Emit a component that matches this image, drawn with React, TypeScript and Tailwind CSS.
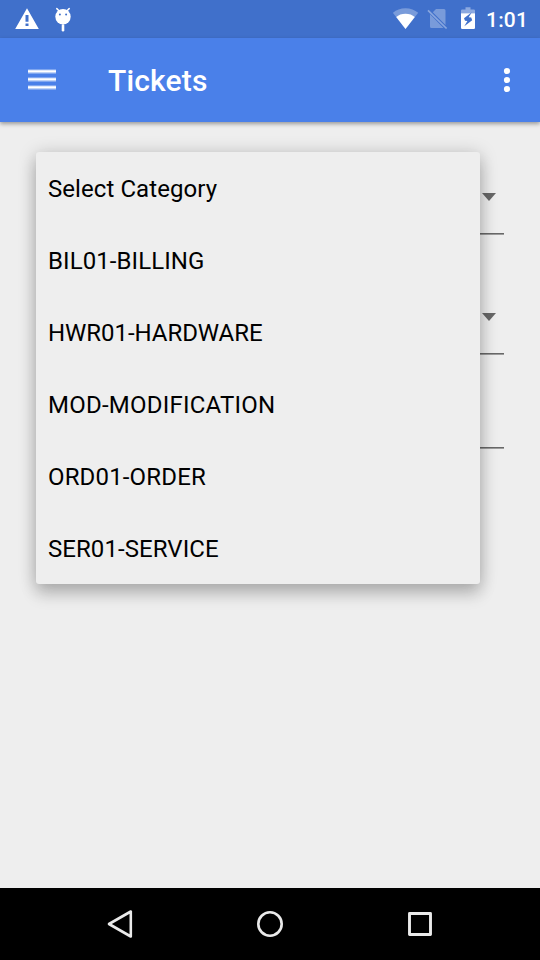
const categories = [
  { name: 'Select Category', tracking: 'tracking-[0.07px]' },
  { name: 'BIL01-BILLING', tracking: 'tracking-[0.08px]' },
  { name: 'HWR01-HARDWARE', tracking: 'tracking-[-0.05px]' },
  { name: 'MOD-MODIFICATION', tracking: 'tracking-[0.23px]' },
  { name: 'ORD01-ORDER', tracking: 'tracking-[0.16px]' },
  { name: 'SER01-SERVICE', tracking: 'tracking-[0.06px]' },
];

function StatusBar() {
  return (
    <div className="flex h-[38px] shrink-0 items-center bg-[#4070cb] text-white">
      <svg className="ml-[15px] h-[38px] w-6" viewBox="0 0 24 38" fill="#fff">
        <path
          fillRule="evenodd"
          d="M12 8.300 23.800 29H.2L12 8.300ZM10.500 15v6.800h3V15h-3Zm0 8.500V26h3v-2.500h-3Z"
        />
      </svg>
      <svg className="ml-[15px] h-[38px] w-[18px]" viewBox="0 0 18 38">
        <path d="M2.800 8.600 5.200 11M15.200 8.600 12.800 11" stroke="#fff" strokeWidth="1.500" strokeLinecap="round" />
        <circle cx="9" cy="16.700" r="7.700" fill="#fff" />
        <path d="M9 25.500v4.700" stroke="#fff" strokeWidth="2.600" strokeLinecap="round" />
        <circle cx="5.900" cy="14.400" r="1" fill="#4070cb" />
        <circle cx="12.100" cy="14.400" r="1" fill="#4070cb" />
      </svg>
      <svg className="ml-auto h-[38px] w-[26px]" viewBox="0 0 26 38">
        <path d="M12.500 29 -.2 12.800C3.100 10 7.500 8.200 12.500 8.200s9.400 1.800 12.700 4.600L12.500 29Z" fill="#fff" fillOpacity=".3" />
        <path d="M12.500 29 3.200 17.100C5.500 14.800 8.800 13.700 12.500 13.700s7 1.100 9.300 3.400L12.500 29Z" fill="#fff" />
      </svg>
      <svg className="ml-2 h-[38px] w-[21px]" viewBox="0 0 21 38">
        <path
          d="M9 9h8a1.500 1.500 0 0 1 1.500 1.500v14.500L5.800 12.300 9 9ZM3 14.300 16.500 28H4.500A1.500 1.500 0 0 1 3 26.500V14.300Z"
          fill="#fff"
          fillOpacity=".3"
        />
        <path d="m1 10.300 18.600 18.200" stroke="#fff" strokeOpacity=".38" strokeWidth="1.700" />
      </svg>
      <svg className="ml-[13px] h-[38px] w-[14px]" viewBox="0 0 14 38">
        <path d="M0 13.300V10.700Q0 9.500 1.200 9.500H4.500V7.300h5v2.200h3.300Q14 9.500 14 10.700V13.300Z" fill="#fff" fillOpacity=".4" />
        <path d="M0 13.300h14v14.500q0 1.200-1.200 1.200H1.200Q0 29 0 27.800Z" fill="#fff" />
        <path d="M10.800 12.300 3 18.200l1 2.500 2.400.3-3.100 5.200 7.900-6-1-2.600-2.500-.3Z" fill="#4070cb" />
      </svg>
      <span className="mr-3 ml-[11px] w-[42px] pt-0.5 text-[21px] leading-[38px] font-medium tracking-[0.2px] whitespace-nowrap">1:01</span>
    </div>
  );
}

function AppBar() {
  return (
    <header className="relative flex h-[84px] shrink-0 items-center bg-[#4a80e9] text-white shadow-[0_2px_4px_rgba(0,0,0,0.35)]">
      <svg className="ml-7 h-[22px] w-7" viewBox="0 0 28 22" fill="#fff">
        <path d="M0 0h28v5H0zM0 8h28v5H0zM0 16h28v5H0z" fillOpacity=".3" />
        <path d="M0 1.200h28v2.300H0zM0 9.200h28v2.300H0zM0 17.200h28v2.300H0z" />
      </svg>
      <h1 className="ml-[52px] pt-0.5 text-[30px] leading-[84px] font-medium tracking-[0.15px]">Tickets</h1>
      <svg className="mr-[29px] ml-auto h-7 w-2" viewBox="0 0 8 28" fill="#fff">
        <circle cx="4" cy="5" r="3.100" />
        <circle cx="4" cy="14" r="3.100" />
        <circle cx="4" cy="23" r="3.100" />
      </svg>
    </header>
  );
}

function Field({ arrow = true }: { arrow?: boolean }) {
  return (
    <div className="flex flex-col">
      <div className="flex h-10 justify-end pr-2">
        {arrow && (
          <svg className="h-2 w-[14px]" viewBox="0 0 14 8" fill="#686868">
            <path d="M0 0h14L7 8Z" />
          </svg>
        )}
      </div>
      <div className="h-px bg-[#686868]" />
      <div className="h-px bg-[#9c9c9c]" />
    </div>
  );
}

function CategoryMenu() {
  return (
    <ul className="absolute top-[30px] left-9 w-[444px] rounded-[3px] bg-[#eeeeee] shadow-[0_11px_16px_rgba(0,0,0,0.16),0_2px_18px_rgba(0,0,0,0.22)]">
      {categories.map(({ name, tracking }) => (
        <li key={name} className={`flex h-[72px] items-center px-3 pt-0.5 text-2xl text-black ${tracking}`}>
          {name}
        </li>
      ))}
    </ul>
  );
}

function NavigationBar() {
  return (
    <nav className="flex h-[72px] shrink-0 items-center justify-center gap-[114px] bg-black">
      <svg className="size-9" viewBox="0 0 36 36" fill="none" stroke="#eaeaea" strokeWidth="2.600" strokeLinejoin="round">
        <path d="M7 18 28.800 5.500v25Z" />
      </svg>
      <svg className="size-9" viewBox="0 0 36 36" fill="none" stroke="#eaeaea" strokeWidth="2.600">
        <circle cx="18" cy="18" r="11.700" />
      </svg>
      <svg className="size-9" viewBox="0 0 36 36" fill="none" stroke="#eaeaea" strokeWidth="2.900" strokeLinejoin="round">
        <path d="M7.500 7.500h21v21h-21z" />
      </svg>
    </nav>
  );
}

export default function App() {
  return (
    <div className="flex h-[960px] w-[540px] flex-col overflow-hidden bg-[#eeeeee] font-['Roboto',sans-serif]">
      <StatusBar />
      <div className="flex flex-1 flex-col">
        <AppBar />
        <main className="relative flex-1">
          <div className="flex flex-col px-9 pt-[71px]">
            <Field />
            <div className="h-[78px]" />
            <Field />
            <div className="h-[52px]" />
            <Field arrow={false} />
          </div>
          <CategoryMenu />
        </main>
      </div>
      <NavigationBar />
    </div>
  );
}
